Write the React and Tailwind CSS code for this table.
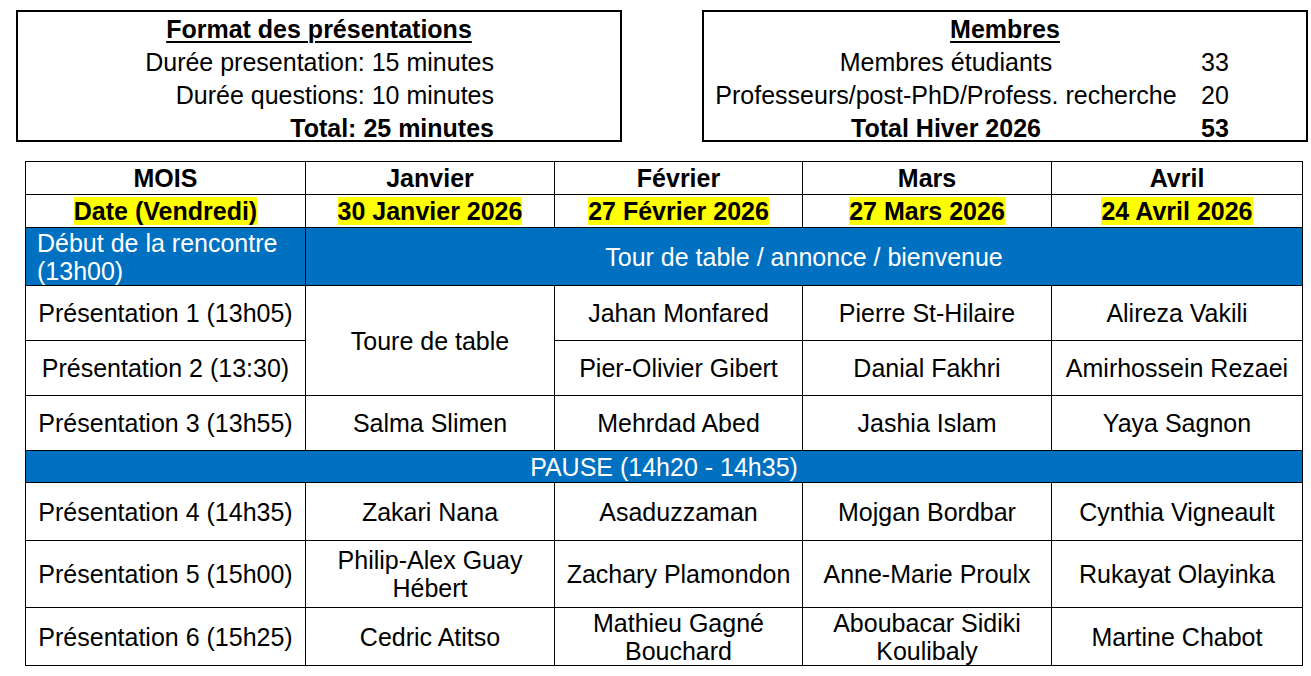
const rows1 = [
  ["Présentation 1 (13h05)", "Jahan Monfared", "Pierre St-Hilaire", "Alireza Vakili"],
  ["Présentation 2 (13:30)", "Pier-Olivier Gibert", "Danial Fakhri", "Amirhossein Rezaei"],
];

const rows2 = [
  ["Présentation 4 (14h35)", "Zakari Nana", "Asaduzzaman", "Mojgan Bordbar", "Cynthia Vigneault", "h-[58px]"],
  ["Présentation 5 (15h00)", "Philip-Alex Guay Hébert", "Zachary Plamondon", "Anne-Marie Proulx", "Rukayat Olayinka", "h-[67px]"],
  ["Présentation 6 (15h25)", "Cedric Atitso", "Mathieu Gagné Bouchard", "Aboubacar Sidiki Koulibaly", "Martine Chabot", "h-[58px]"],
];

const cell = "border border-black text-center align-middle px-1 leading-[28px]";

export default function App() {
  return (
    <div className="w-[1311px] h-[676px] bg-white text-black text-[25px] overflow-hidden" style={{ fontFamily: '"Liberation Sans", Arial, sans-serif' }}>
      <div className="flex pt-[10px] pl-[16px] gap-[80px]">
        <div className="w-[606px] h-[132px] border-2 border-black flex flex-col leading-[33px] pt-[1px]">
          <div className="text-center font-bold underline decoration-2 underline-offset-[3px]">Format des présentations</div>
          <div className="w-[476px] text-right">Durée presentation: 15 minutes</div>
          <div className="w-[476px] text-right">Durée questions: 10 minutes</div>
          <div className="w-[476px] text-right font-bold">Total: 25 minutes</div>
        </div>
        <div className="w-[606px] h-[132px] border-2 border-black flex flex-col leading-[33px] pt-[1px]">
          <div className="text-center font-bold underline decoration-2 underline-offset-[3px]">Membres</div>
          <div className="flex">
            <div className="w-[484px] text-center">Membres étudiants</div>
            <div className="pl-[13px]">33</div>
          </div>
          <div className="flex">
            <div className="w-[484px] text-center">Professeurs/post-PhD/Profess. recherche</div>
            <div className="pl-[13px]">20</div>
          </div>
          <div className="flex font-bold">
            <div className="w-[484px] text-center">Total Hiver 2026</div>
            <div className="pl-[13px]">53</div>
          </div>
        </div>
      </div>

      <table className="ml-[25px] mt-[19px] w-[1277px] table-fixed border-collapse">
        <colgroup>
          <col className="w-[280px]" />
          <col className="w-[249px]" />
          <col className="w-[248px]" />
          <col className="w-[249px]" />
          <col className="w-[251px]" />
        </colgroup>
        <tbody>
          <tr className="h-[33px] font-bold">
            <td className={cell}>MOIS</td>
            <td className={cell}>Janvier</td>
            <td className={cell}>Février</td>
            <td className={cell}>Mars</td>
            <td className={cell}>Avril</td>
          </tr>
          <tr className="h-[33px] font-bold">
            {["Date (Vendredi)", "30 Janvier 2026", "27 Février 2026", "27 Mars 2026", "24 Avril 2026"].map((t) => (
              <td key={t} className={cell}>
                <span className="bg-[#ffff00]">{t}</span>
              </td>
            ))}
          </tr>
          <tr className="h-[58px] bg-[#0070c0] text-white">
            <td className="border border-black align-middle text-left pl-[11px] pr-1 leading-[28px]">Début de la rencontre (13h00)</td>
            <td colSpan={4} className={cell}>Tour de table / annonce / bienvenue</td>
          </tr>
          {rows1.map((r, i) => (
            <tr key={r[0]} className="h-[55px]">
              <td className={cell}>{r[0]}</td>
              {i === 0 && (
                <td rowSpan={2} className={cell}>Toure de table</td>
              )}
              <td className={cell}>{r[1]}</td>
              <td className={cell}>{r[2]}</td>
              <td className={cell}>{r[3]}</td>
            </tr>
          ))}
          <tr className="h-[55px]">
            <td className={cell}>Présentation 3 (13h55)</td>
            <td className={cell}>Salma Slimen</td>
            <td className={cell}>Mehrdad Abed</td>
            <td className={cell}>Jashia Islam</td>
            <td className={cell}>Yaya Sagnon</td>
          </tr>
          <tr className="h-[32px] bg-[#0070c0] text-white">
            <td colSpan={5} className="border border-black text-center align-middle leading-[28px]">PAUSE (14h20 - 14h35)</td>
          </tr>
          {rows2.map((r) => (
            <tr key={r[0]} className={r[5]}>
              <td className={cell}>{r[0]}</td>
              <td className={cell}>{r[1]}</td>
              <td className={cell}>{r[2]}</td>
              <td className={cell}>{r[3]}</td>
              <td className={cell}>{r[4]}</td>
            </tr>
          ))}
        </tbody>
      </table>
    </div>
  );
}
